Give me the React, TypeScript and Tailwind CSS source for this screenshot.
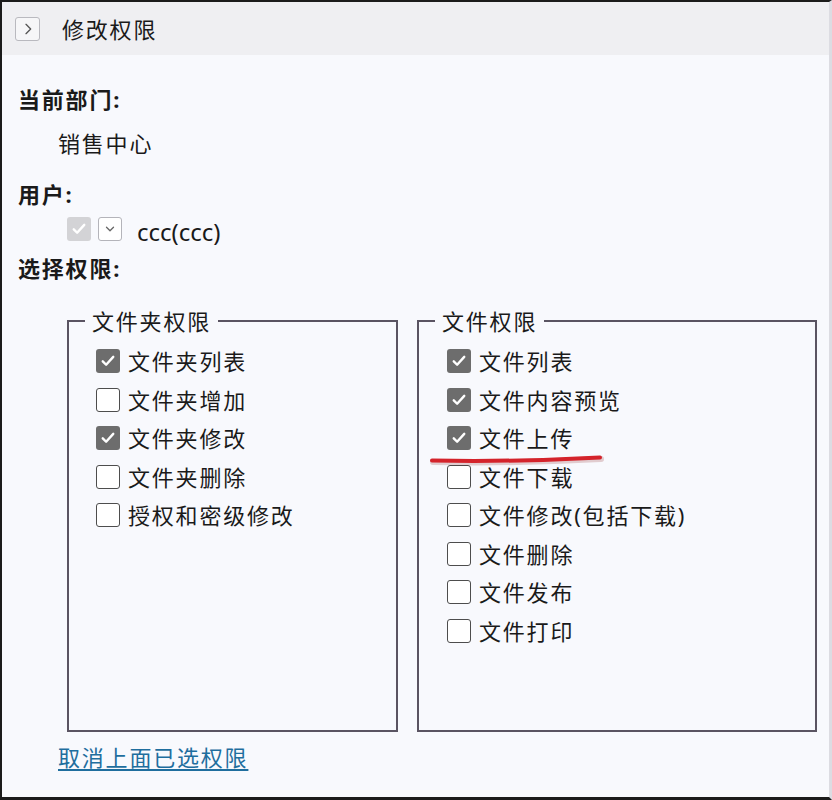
import React from 'react';

const folderPerms = [
  { label: '文件夹列表', checked: true },
  { label: '文件夹增加', checked: false },
  { label: '文件夹修改', checked: true },
  { label: '文件夹删除', checked: false },
  { label: '授权和密级修改', checked: false },
];

const filePerms = [
  { label: '文件列表', checked: true },
  { label: '文件内容预览', checked: true },
  { label: '文件上传', checked: true },
  { label: '文件下载', checked: false },
  { label: '文件修改(包括下载)', checked: false },
  { label: '文件删除', checked: false },
  { label: '文件发布', checked: false },
  { label: '文件打印', checked: false },
];

const Check = ({ checked }: { checked: boolean }) =>
  checked ? (
    <span className="w-[24px] h-[24px] rounded-[3px] bg-[#6d6d6d] flex items-center justify-center shrink-0">
      <svg viewBox="0 0 24 24" className="w-[18px] h-[18px]" fill="none" stroke="white" strokeWidth={3.2} strokeLinecap="round" strokeLinejoin="round">
        <path d="M5 12.5l4.5 4.5L19 6.5" />
      </svg>
    </span>
  ) : (
    <span className="w-[24px] h-[24px] rounded-[3px] bg-white border-[1.5px] border-[#4d4d4d] shrink-0" />
  );

const PermBox = ({
  title,
  items,
  className,
  legendClass,
}: {
  title: string;
  items: { label: string; checked: boolean }[];
  className: string;
  legendClass: string;
}) => (
  <fieldset className={`border-2 border-[#5a5462] h-[426px] ${className}`}>
    <legend className={`px-[7px] leading-[30px] text-[22px] tracking-[1.8px] text-[#1a1a1a] ${legendClass}`}>{title}</legend>
    <div className="pt-[6px] flex flex-col">
      {items.map((item) => (
        <div key={item.label} className="h-[38.5px] flex items-center gap-[8px]">
          <Check checked={item.checked} />
          <span className="text-[22px] leading-[30px] tracking-[1.8px] text-[#1a1a1a]">{item.label}</span>
        </div>
      ))}
    </div>
  </fieldset>
);

export default function App() {
  return (
    <div
      className="relative w-[832px] h-[800px] bg-[#f8f9fd] border-t-2 border-l-2 border-b-[3px] border-r-[3px] border-t-[#1b1b1b] border-l-[#1b1b1b] border-b-[#1b1b1b] border-r-[#dcdce2] text-[#1a1a1a] tracking-[1.8px]"
      style={{ fontFamily: '"Noto Sans", "Noto Sans CJK SC", sans-serif' }}
    >
      {/* Header */}
      <div className="h-[53px] bg-[#efeff2] flex items-center pl-[13px]">
        <span className="w-[25px] h-[24px] rounded-[3px] border border-[#b9b9bf] bg-[#f6f6f8] flex items-center justify-center">
          <svg viewBox="0 0 24 24" className="w-[16px] h-[16px]" fill="none" stroke="#555" strokeWidth={2} strokeLinecap="round" strokeLinejoin="round">
            <path d="M9 5l7 7-7 7" />
          </svg>
        </span>
        <span className="ml-[22px] text-[22px] leading-[30px]">修改权限</span>
      </div>

      {/* Body */}
      <div className="pl-[16px]">
        <div className="mt-[29px] font-bold text-[22px] leading-[30px]">当前部门:</div>
        <div className="mt-[14px] ml-[40px] text-[22px] leading-[30px]">销售中心</div>
        <div className="mt-[21px] font-bold text-[22px] leading-[30px]">用户:</div>
        <div className="mt-[5px] ml-[49px] h-[30px] flex items-center">
          <span className="w-[24px] h-[24px] rounded-[3px] bg-[#d3d3d6] flex items-center justify-center">
            <svg viewBox="0 0 24 24" className="w-[18px] h-[18px]" fill="none" stroke="white" strokeWidth={3.2} strokeLinecap="round" strokeLinejoin="round">
              <path d="M5 12.5l4.5 4.5L19 6.5" />
            </svg>
          </span>
          <span className="ml-[7px] w-[24px] h-[24px] rounded-[3px] border border-[#b4b4ba] bg-white flex items-center justify-center">
            <svg viewBox="0 0 24 24" className="w-[14px] h-[14px]" fill="none" stroke="#666" strokeWidth={2.2} strokeLinecap="round" strokeLinejoin="round">
              <path d="M6 9l6 6 6-6" />
            </svg>
          </span>
          <span className="ml-[15px] text-[24px] leading-[30px] mt-[6px] tracking-normal">ccc(ccc)</span>
        </div>
        <div className="mt-[9px] font-bold text-[22px] leading-[30px]">选择权限:</div>

        <div className="mt-[23px] ml-[49px] flex gap-[19px]">
          <PermBox title="文件夹权限" items={folderPerms} className="w-[331px] pl-[27px]" legendClass="-ml-[11px]" />
          <PermBox title="文件权限" items={filePerms} className="w-[400px] pl-[28px]" legendClass="-ml-[12px]" />
        </div>

        <a href="#" className="block mt-[10px] ml-[40px] w-fit text-[22px] leading-[30px] text-[#1f6e9e] underline underline-offset-[3px]">
          取消上面已选权限
        </a>
      </div>

      {/* red annotation stroke */}
      <svg className="absolute left-[420px] top-[448px] w-[190px] h-[20px] pointer-events-none" viewBox="0 0 190 20" fill="none">
        <path d="M10 10.5 Q 95 12 178 7.5" stroke="rgba(120,0,0,0.18)" strokeWidth={6} strokeLinecap="round" transform="translate(1 1.5)" />
        <path d="M10 10.5 Q 95 12 178 7.5" stroke="#d4232b" strokeWidth={4} strokeLinecap="round" />
      </svg>
    </div>
  );
}
